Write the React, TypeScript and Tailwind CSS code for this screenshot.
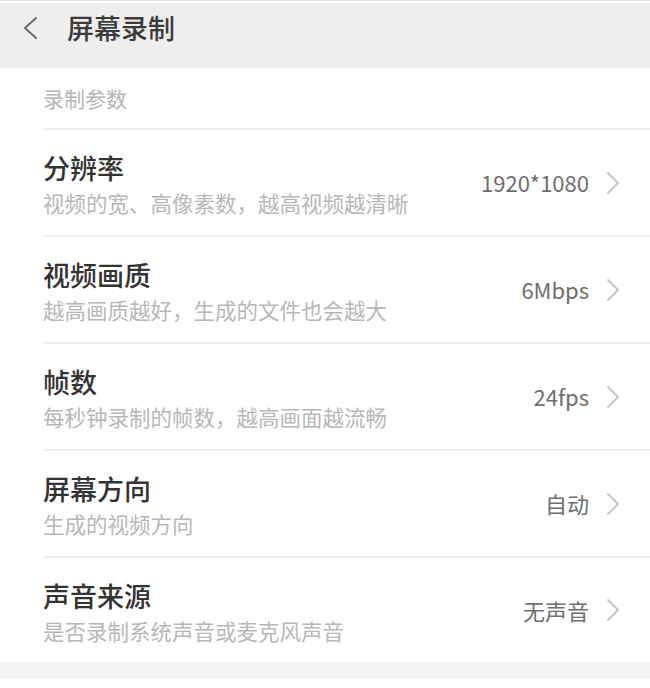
const rows = [
  { title: "分辨率", hint: "视频的宽、高像素数，越高视频越清晰", value: "1920*1080" },
  { title: "视频画质", hint: "越高画质越好，生成的文件也会越大", value: "6Mbps" },
  { title: "帧数", hint: "每秒钟录制的帧数，越高画面越流畅", value: "24fps" },
  { title: "屏幕方向", hint: "生成的视频方向", value: "自动" },
  { title: "声音来源", hint: "是否录制系统声音或麦克风声音", value: "无声音" },
];

function Chevron() {
  return (
    <svg width="14" height="24" viewBox="0 0 14 24" fill="none" className="shrink-0">
      <path d="M2 2 L12 12 L2 22" stroke="#c4c4c4" strokeWidth="1.8" strokeLinecap="round" strokeLinejoin="round" />
    </svg>
  );
}

export default function App() {
  return (
    <div
      className="w-[650px] h-[688px] overflow-hidden bg-white"
      style={{ fontFamily: '"Noto Sans CJK SC", "Noto Sans", sans-serif' }}
    >
      <div className="h-px bg-[#e6e6e6]" />
      <div className="h-[2px] bg-white" />
      <header className="h-[65px] bg-[#eeeeee] flex items-start pt-[9px]">
        <svg width="16" height="24" viewBox="0 0 16 24" fill="none" className="ml-[22px] mt-[4px] shrink-0">
          <path d="M14 2 L3 12 L14 22" stroke="#6b6b6b" strokeWidth="2" strokeLinecap="round" strokeLinejoin="round" />
        </svg>
        <h1 className="ml-[29px] text-[27px] font-medium text-[#3c3c3c] leading-[32px]">屏幕录制</h1>
      </header>

      <div className="h-[60px] flex items-center pl-[43px]">
        <span className="text-[21px] text-[#b5b5b5] leading-none">录制参数</span>
      </div>

      <div className="pl-[43px]">
        {rows.map((r, i) => (
          <div key={r.title}>
            <div className="h-[2px] bg-[#f0f0f0]" />
            <div className={`flex items-center pr-[30px] ${i === rows.length - 1 ? "h-[104px]" : "h-[105px]"}`}>
              <div className="flex-1 min-w-0 pt-[2px]">
                <div className="text-[27px] leading-[36px] font-medium text-[#333333]">{r.title}</div>
                <div className="mt-[3px] text-[21.5px] leading-[28px] text-[#b8b8b8]">{r.hint}</div>
              </div>
              <span className="text-[22px] text-[#6e6e6e] mr-[17px]">{r.value}</span>
              <Chevron />
            </div>
          </div>
        ))}
      </div>

      <div className="h-[17px] bg-[#f4f4f4]" />
    </div>
  );
}
